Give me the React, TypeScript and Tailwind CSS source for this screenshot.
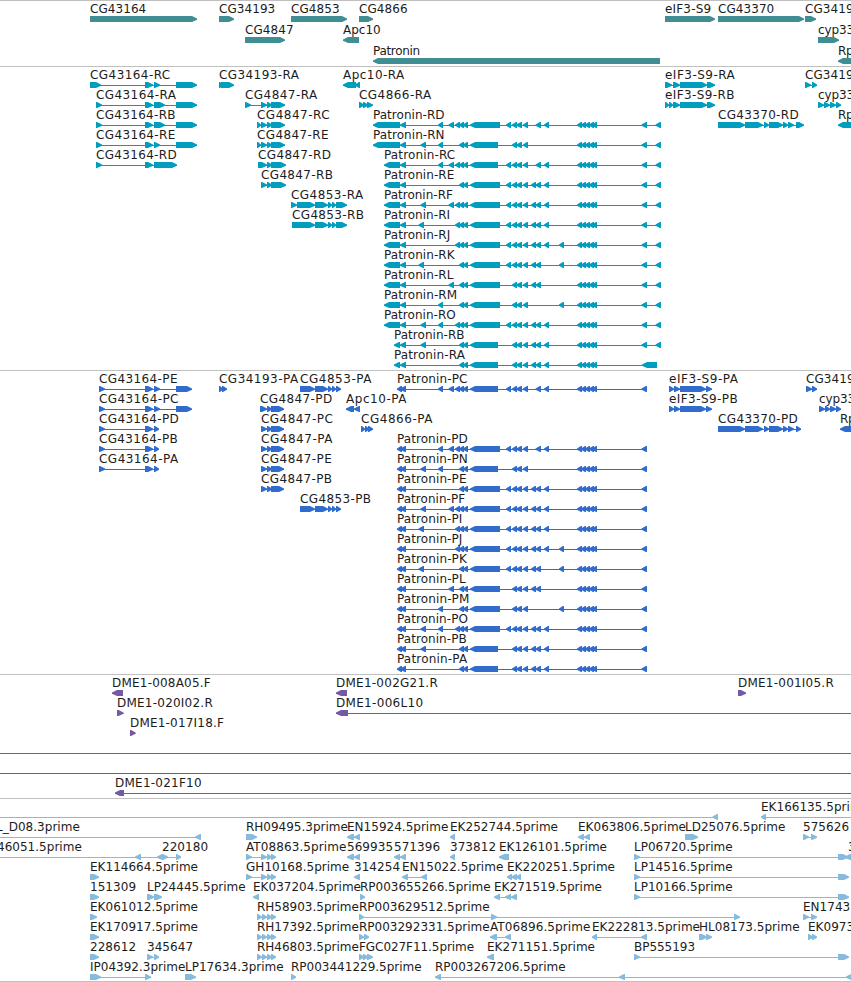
type Direction = 'left' | 'right';
type Span = [number, number];

interface Feature {
  label?: string;
  row: number;
  dir: Direction;
  spans: Span[];
  // where the connecting line runs to when it leaves the visible window
  from?: number;
  to?: number;
  labelX?: number;
}

interface TrackProps {
  features: Feature[];
  height: number;
  color: string;
  rowHeight?: number;
}

const WIDTH = 851;
const HEAD = 6;

const r = (label: string, row: number, ...spans: Span[]): Feature => ({ label, row, dir: 'right', spans });
const l = (label: string, row: number, ...spans: Span[]): Feature => ({ label, row, dir: 'left', spans });

// Advance widths of the label characters, in pixels
const ADVANCE: Record<string, number> = {
  C: 8.5, G: 9.4, R: 8, P: 7.2, A: 8.2, B: 7.8, D: 8.9, E: 7.6, F: 6.2, H: 9, I: 3.4, J: 3.5, K: 7.9,
  L: 6.7, M: 10.4, N: 8.9, O: 9, S: 6.4, T: 7.3, a: 6.4, c: 6.4, e: 7.3, i: 3.3, m: 11.8, n: 7.1,
  o: 6.9, p: 7.7, r: 4.8, t: 4.4, y: 6.8, '.': 3.9, '-': 7.5, _: 6.4,
};

function labelWidth(text: string) {
  return [...text].reduce((sum, ch) => sum + (ADVANCE[ch] ?? 7.67), 0);
}

const genes: Feature[] = [
  r('CG43164', 0, [90, 197]),
  r('CG34193', 0, [219, 234]),
  r('CG4847', 1, [245, 285]),
  r('CG4853', 0, [291, 347]),
  r('CG4866', 0, [359, 373]),
  l('Apc10', 1, [343, 359]),
  l('Patronin', 2, [373, 660]),
  r('eIF3-S9', 0, [665, 715]),
  r('CG43370', 0, [718, 804]),
  r('CG3419', 0, [805, 816]),
  r('cyp33', 1, [818, 839]),
  l('Rp', 2, [838, 862]),
];

// Exons shared by the Patronin isoforms
const cluster: Span[] = [[577, 582], [581, 586], [585, 590], [589, 594], [592, 597]];
const e400: Span = [400, 406];
const e419: Span = [418.5, 424];
const e421: Span = [420.5, 426];
const e438: Span = [438, 443];
const e449: Span = [448.5, 454];
const e455: Span = [455, 460];
const e459: Span[] = [[459, 464], [463, 468]];
const short: Span = [470, 498];
const long: Span = [470, 500];
const e506: Span = [506, 511];
const e512: Span[] = [[512, 517], [516, 522], [523, 528]];
const e531: Span[] = [[531, 536], [535.5, 541]];
const e536: Span = [535.5, 541];
const e544: Span = [544, 549];
const e559: Span = [559, 564];

const isoforms: Record<string, Span[]> = {
  D: [e438, e449, e455, ...e459, long, e506, ...e512, e536, e544],
  N: [e421, e438, ...e459, short, ...e512],
  C: [e438, e449, e455, ...e459, short, e506, ...e512, e536, e544],
  E: [...e459, long, e506, ...e512, ...e531, e544],
  F: [e421, e449, e455, ...e459, long, e506, ...e512, ...e531, e544],
  I: [e419, e455, ...e459, long, e506, ...e512, ...e531, e544],
  J: [e455, ...e459, long, e506, ...e512, ...e531, e544, e559],
  K: [e419, ...e459, long, e506, ...e512, ...e531, e559],
  L: [e449, ...e459, long, ...e512, ...e531],
  M: [e438, ...e459, long, ...e512, e559],
  O: [e421, e438, e455, ...e459, long, e506, ...e512, ...e531, e544],
  B: [e421, ...e459, short, ...e512, ...e531, e544],
  A: [...e459, short, ...e512, ...e531, e544],
};

const patroninR = [...'DNCEFIJKLMOBA'].map((id, i) => {
  const start = i < 2 ? 373 : i < 11 ? 384 : 394;
  const tail: Span[] = id === 'A' ? [[642, 657]] : [[641.5, 647], [655.5, 661]];
  return l(`Patronin-R${id}`, i + 2, [start, 400], e400, ...isoforms[id], ...cluster, ...tail);
});

const patroninP = [...'CDNEFIJKLMOBA'].map((id, i) =>
  l(`Patronin-P${id}`, i === 0 ? 0 : i + 2, [397, 402], e400, ...isoforms[id], ...cluster, [641.5, 647]),
);

const cg4847: Span[] = [[261, 267], [267, 272], [271, 285]];
const cg4847P: Span[] = [[261, 267], [267, 272], [271, 284]];
const cg4853: Span[] = [[315, 328], [328, 332], [332, 336], [336, 347]];
const cg4853P: Span[] = [[300, 315], [315, 328], [328, 332], [332, 336], [336, 341]];
const cg43370: Span[] = [[718, 745], [745, 763], [764, 769], [769, 783], [783, 788], [788, 794]];

const transcripts: Feature[] = [
  r('CG43164-RC', 0, [90, 101], [145, 153], [154, 160], [176, 197]),
  r('CG43164-RA', 1, [96, 102], [145, 153], [154, 165], [176, 197]),
  r('CG43164-RB', 2, [96, 102], [145, 153], [154, 165], [176, 197]),
  r('CG43164-RE', 3, [96, 102], [145, 153], [154, 160], [176, 197]),
  r('CG43164-RD', 4, [96, 102], [145, 153], [154, 177]),
  r('CG34193-RA', 0, [219, 223], [221, 234]),
  r('CG4847-RA', 1, [245, 251], ...cg4847),
  r('CG4847-RC', 2, [257, 261], ...cg4847),
  r('CG4847-RE', 3, [257, 261], ...cg4847),
  r('CG4847-RD', 4, [258, 267], [267, 272], [271, 286]),
  r('CG4847-RB', 5, [261, 267], [267, 272], [271, 286]),
  r('CG4853-RA', 6, [291, 297], [297, 315], ...cg4853),
  r('CG4853-RB', 7, [292, 315], ...cg4853),
  l('Apc10-RA', 0, [343, 356], [355, 360]),
  r('CG4866-RA', 1, [359, 364], [363, 368], [367, 373]),
  ...patroninR,
  r('eIF3-S9-RA', 0, [665, 672], [673, 680], [680, 707], [707, 715]),
  r('eIF3-S9-RB', 1, [665, 669], [669, 673], [673, 680], [680, 707], [707, 715]),
  r('CG43370-RD', 2, ...cg43370, [796, 804]),
  r('CG3419', 0, [805, 811], [812, 817]),
  r('cyp33', 1, [818, 824], [824, 830], [830, 836], [836, 841]),
  l('Rp', 2, [838, 862]),
];

const proteins: Feature[] = [
  r('CG43164-PE', 0, [99, 105], [145, 153], [154, 160], [176, 192]),
  r('CG43164-PC', 1, [99, 105], [145, 153], [154, 160], [176, 192]),
  r('CG43164-PD', 2, [99, 105], [145, 153], [154, 159]),
  r('CG43164-PB', 3, [99, 105], [145, 153], [154, 159]),
  r('CG43164-PA', 4, [99, 105], [145, 153], [154, 159]),
  r('CG34193-PA', 0, [219, 223], [222, 227]),
  r('CG4853-PA', 0, ...cg4853P),
  r('CG4847-PD', 1, [260, 267], [267, 272], [271, 284]),
  r('CG4847-PC', 2, ...cg4847P),
  r('CG4847-PA', 3, ...cg4847P),
  r('CG4847-PE', 4, ...cg4847P),
  r('CG4847-PB', 5, ...cg4847P),
  r('CG4853-PB', 6, ...cg4853P),
  l('Apc10-PA', 1, [346, 354], [354, 360]),
  r('CG4866-PA', 2, [361, 365], [365, 369], [368, 373]),
  ...patroninP,
  r('eIF3-S9-PA', 0, [669, 674], [674, 680], [680, 706], [706, 712]),
  r('eIF3-S9-PB', 1, [669, 674], [674, 680], [680, 706], [706, 712]),
  r('CG43370-PD', 2, ...cg43370, [796, 801]),
  r('CG3419', 0, [806, 812], [812, 817]),
  r('cyp33', 1, [819, 825], [825, 830], [830, 836], [836, 841]),
  l('Rp', 2, [840, 862]),
];

const clones: Feature[] = [
  l('DME1-008A05.F', 0, [112, 123]),
  r('DME1-020I02.R', 1, [117, 123.5]),
  r('DME1-017I18.F', 2, [130, 135.5]),
  l('DME1-002G21.R', 0, [336, 347]),
  { ...l('DME1-006L10', 1, [336, 348]), to: WIDTH },
  r('DME1-001I05.R', 0, [738, 746]),
  { row: 3, dir: 'left', spans: [], from: 0, to: WIDTH },
  { row: 4, dir: 'left', spans: [], from: 0, to: WIDTH },
  { ...l('DME1-021F10', 5, [115, 124]), to: WIDTH },
];

const rhSpans: Span[] = [[257, 262], [262, 267], [267, 272], [271, 276]];
const atSpans: Span[] = [[246, 252], [261, 267], [267, 272], [271, 276]];

const ests: Feature[] = [
  { row: 0, dir: 'left', spans: [[712.5, 718]], from: 0 },
  { ...l('EK166135.5prime', 0, [761, 766]), to: WIDTH },

  { ...l('L_D08.3prime', 1, [195, 201]), from: 0, labelX: -4 },
  r('RH09495.3prime', 1, [246, 257]),
  l('EN15924.5prime', 1, [347, 354], [354, 360]),
  l('EK252744.5prime', 1, [450, 455]),
  l('EK063806.5prime', 1, [578, 584], [584, 590]),
  r('LD25076.5prime', 1, [685, 698]),
  r('575626', 1, [803, 809], [811, 817]),

  { ...l('46051.5prime', 2, [135, 141], [157, 163]), from: 0, labelX: -3 },
  r('220180', 2, [162, 168], [176, 181]),
  r('AT08863.5prime', 2, ...atSpans),
  l('569935', 2, [347, 354], [354, 360]),
  l('571396', 2, [394, 400], [400, 406]),
  l('373812', 2, [450, 455]),
  l('EK126101.5prime', 2, [499, 509]),
  r('LP06720.5prime', 2, [634, 640], [838, 848]),
  { ...l('3', 2, [845, 851]), labelX: 848 },

  r('EK114664.5prime', 3, [90, 99]),
  r('GH10168.5prime', 3, ...atSpans),
  l('314254', 3, [354, 360]),
  l('EN15022.5prime', 3, [402, 408], [421, 427]),
  l('EK220251.5prime', 3, [507, 512], [511, 517], [516, 521]),
  r('LP14516.5prime', 3, [634, 640], [838, 849]),

  r('151309', 4, [90, 99]),
  r('LP24445.5prime', 4, [147, 154], [154, 162]),
  l('EK037204.5prime', 4, [253, 259]),
  r('RP003655266.5prime', 4, [360, 365]),
  l('EK271519.5prime', 4, [494, 500], [505, 511], [511, 517]),
  r('LP10166.5prime', 4, [634, 640], [838, 849]),

  r('EK061012.5prime', 5, [90, 97]),
  r('RH58903.5prime', 5, ...rhSpans),
  r('RP003629512.5prime', 5, [359, 364], [491, 497], [734, 740]),
  r('EN1743', 5, [803, 809], [811, 817]),

  r('EK170917.5prime', 6, [90, 99]),
  r('RH17392.5prime', 6, ...rhSpans),
  r('RP003292331.5prime', 6, [359, 364], [364, 369]),
  l('AT06896.5prime', 6, [490, 497], [505, 511]),
  l('EK222813.5prime', 6, [592, 597], [641, 647]),
  r('HL08173.5prime', 6, [699, 707], [706, 712]),
  r('EK0973', 6, [808, 813], [812, 817]),

  r('228612', 7, [90, 99]),
  r('345647', 7, [147, 153], [154, 159]),
  r('RH46803.5prime', 7, ...rhSpans),
  r('FGC027F11.5prime', 7, [359, 364], [363, 368], [367, 373]),
  l('EK271151.5prime', 7, [487, 494]),
  r('BP555193', 7, [634, 640], [838, 849]),

  r('IP04392.3prime', 8, [90, 101], [145, 151]),
  r('LP17634.3prime', 8, [185, 196]),
  r('RP003441229.5prime', 8, [291, 296]),
  l('RP003267206.5prime', 8, [435, 441], [619, 625], [846, 853]),
];

function arrowPoints([start, end]: Span, dir: Direction) {
  const head = Math.min(HEAD, end - start);
  if (dir === 'right') {
    const neck = end - head + 1;
    return `${start},0 ${neck},0 ${end},2.4 ${end},3.8 ${neck},6 ${start},6`;
  }
  const neck = start + head - 1;
  return `${end},0 ${neck},0 ${start},2.4 ${start},3.8 ${neck},6 ${end},6`;
}

function FeatureGlyph({ feature, y }: { feature: Feature; y: number }) {
  const { label, dir, spans, from, to, labelX } = feature;
  const x1 = from ?? spans[0][0];
  const x2 = to ?? spans[spans.length - 1][1];

  return (
    <g transform={`translate(0 ${y})`}>
      {label && (
        <text
          x={labelX ?? spans[0][0]}
          y={12}
          textLength={labelWidth(label)}
          className="fill-[#1c1c1c] font-['DejaVu_Sans',sans-serif] text-[12px]"
        >
          {label}
        </text>
      )}
      <rect x={x1} y={18} width={x2 - x1} height={1} />
      <g transform="translate(0 15)">
        {spans.map((span) => (
          <polygon key={span[0]} points={arrowPoints(span, dir)} />
        ))}
      </g>
    </g>
  );
}

function Track({ features, height, color, rowHeight = 20 }: TrackProps) {
  return (
    <section className="border-t border-[#c0c0c0]">
      <svg width={WIDTH} height={height} className={`block ${color}`}>
        {features.map((feature, i) => (
          <FeatureGlyph key={i} feature={feature} y={feature.row * rowHeight} />
        ))}
      </svg>
    </section>
  );
}

export default function App() {
  return (
    <main className="flex h-[982px] w-[851px] flex-col overflow-hidden bg-white">
      <Track features={genes} height={65} color="fill-[#408e94]" rowHeight={21} />
      <Track features={transcripts} height={303} color="fill-[#009dbf]" />
      <Track features={proteins} height={303} color="fill-[#316ccc]" />
      <Track features={clones} height={123} color="fill-[#7558a6]" />
      <Track features={ests} height={182} color="fill-[#87bbdd]" />
      <div className="border-t border-[#c0c0c0]" />
    </main>
  );
}
